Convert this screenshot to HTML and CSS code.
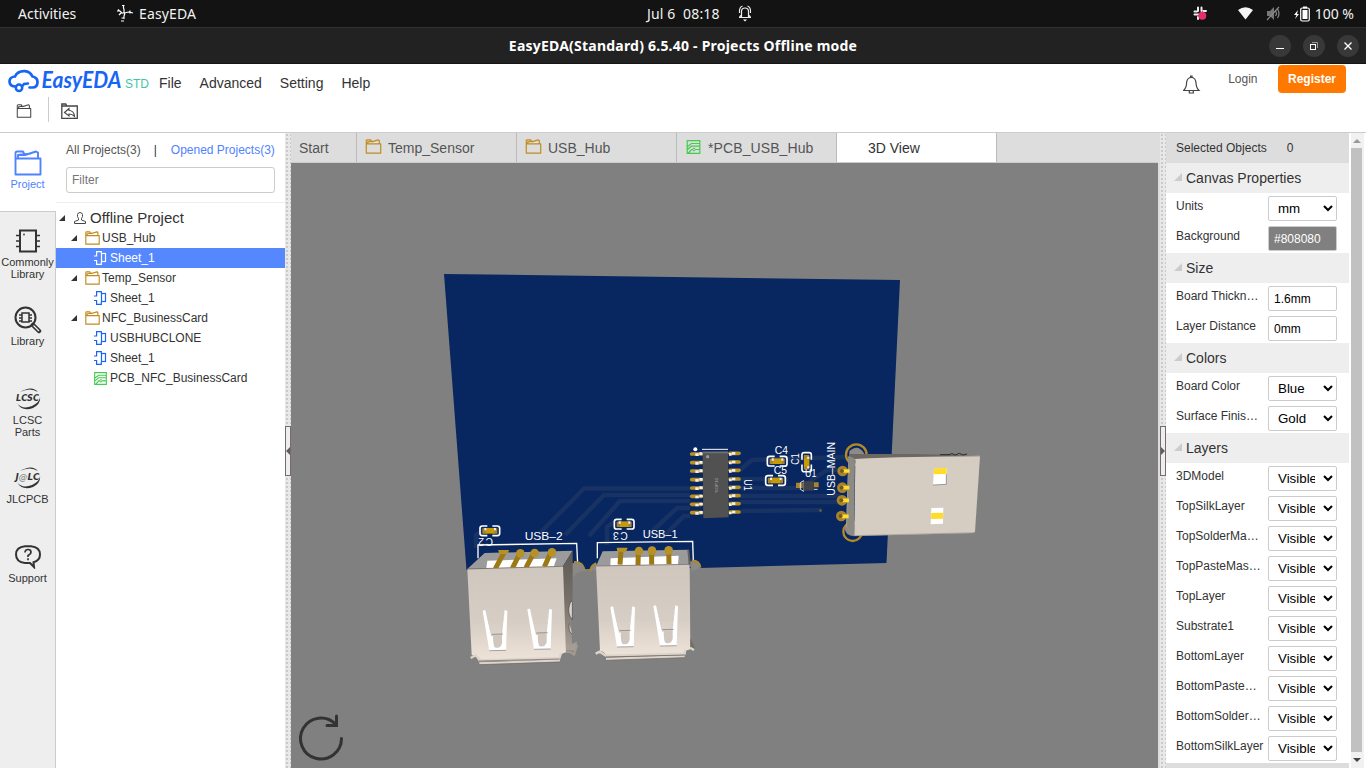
FILE: index.html
```html
<!DOCTYPE html>
<html lang="en">
<head>
<meta charset="utf-8">
<title>EasyEDA</title>
<link rel="stylesheet" href="styles.css">
</head>
<body>
<svg class="defs" width="0" height="0">
  <symbol id="folder" viewBox="0 0 28 26"><path d="M1.500 24.500V8.500h25v16zM1.500 8.500V3q0-1.500 1.500-1.500h6l1.500 3M4 8V5l13-1.500M11 5l11-3.500 2 1v6" fill="none" stroke="currentColor" stroke-linejoin="round"/></symbol>
  <symbol id="sheet" viewBox="0 0 13 14"><path d="M7 .600H2.600v4.400H0M0 9.500h2.600v3.900H7M7.300 0v2.500M7.300 11v3" fill="none" stroke="currentColor" stroke-width="1.200"/><rect x="7.500" y="2.500" width="4" height="8" fill="none" stroke="currentColor" stroke-width="1.200"/></symbol>
  <symbol id="pcb" viewBox="0 0 14 14"><path d="M.7.7h12.600v12.600H.7zM1 6.500l4-3h8M1 9.500l4-3.300h8M2 13l3-3.500h1.500M9 9.500h4" fill="none" stroke="currentColor" stroke-width="1.200"/><circle cx="7.500" cy="9.500" r="1.300" fill="none" stroke="currentColor"/></symbol>
  <symbol id="tri" viewBox="0 0 8 8"><path d="M8 0v8H0z" fill="currentColor"/></symbol>
</svg>

<div class="topbar">
  <span class="act">Activities</span>
  <svg class="appicon" width="18" height="18" viewBox="0 0 18 18" fill="none" stroke="#fff" stroke-width="1.200"><path d="M0 7h3l2 2 4-.500 3-.500 4 1M7 9V5.500L6.500 4V1.500M5 1.500h2.500M8 9l-1 3v3M4.500 14h3M4 17h3M1 5.500l1.500 1.500M13 6.500v3M4 9l-2 2"/></svg>
  <span class="app">EasyEDA</span>
  <span class="clock">Jul 6&nbsp; 08:18</span>
  <svg class="tbell" width="14" height="17" viewBox="0 0 14 17" fill="none" stroke="#eee" stroke-width="1.200"><path d="M1 12.500h12M3.500 12V6.500q0-3.500 3.500-3.500t3.500 3.500V12M1.500 8q-.5-6 3-7M12.500 8q.5-6-3-7M1.500 12l2-2M12.500 12l-2-2"/><path d="M5 14.500h4L7 16.500z" fill="#fff" stroke="none"/></svg>
  <div class="tray">
    <svg width="15" height="15" viewBox="0 0 15 15"><path d="M5 1.500v3.500M8.500 1.500v3.500M1.500 5.500h2.500M1.500 8.500h4M5 11v2M10.500 5h2.500" stroke="#eee" stroke-width="2" stroke-linecap="round"/><circle cx="9.300" cy="9.800" r="4" fill="#e52d6f"/></svg>
    <svg class="wifi" width="15" height="13" viewBox="0 0 15 13"><path d="M0 3q7.500-5.500 15 0L7.500 12.500z" fill="#f5f5f5"/></svg>
    <svg class="mute" width="15" height="15" viewBox="0 0 15 15"><path d="M1 5h3l4-4v13l-4-4H1z" fill="#777"/><path d="M9.500 5q2 2.500 0 5M11.500 3q3 4.500 0 9M1 14L13 1" fill="none" stroke="#888" stroke-width="1.200"/></svg>
    <svg class="bat" width="16" height="16" viewBox="0 0 16 16"><path d="M4 4L0 9h2.500L1 13l4-5H3z" fill="#fff"/><rect x="6.700" y="2" width="8.600" height="13" rx="1.500" fill="none" stroke="#fff" stroke-width="1.200"/><path d="M9 .5h4v2H9zM8.500 4h5v9h-5z" fill="#fff"/></svg>
    <span class="pct">100 %</span>
  </div>
</div>
<div class="titlebar">
  <span class="wtitle">EasyEDA(Standard) 6.5.40 - Projects Offline mode</span>
  <div class="winbtns">
    <span class="wb"><svg width="22" height="22"><path d="M7 13.500h8" stroke="#fff"/></svg></span>
    <span class="wb"><svg width="22" height="22" fill="none"><path d="M9 7.500h5.500V13" stroke="#999"/><rect x="7.500" y="9.500" width="5" height="5" stroke="#fff"/></svg></span>
    <span class="wb"><svg width="22" height="22"><path d="M7.500 7.500l7 7M14.500 7.500l-7 7" stroke="#fff" stroke-width="1.300"/></svg></span>
  </div>
</div>

<header class="header">
  <div class="menus">
    <svg class="logo" width="142" height="26" viewBox="0 0 142 26"><path d="M8 17.500Q1.500 17.500 1.500 12.500 1.500 8 7 7.500 9.500 1.800 17 2.200q5 .3 7.500 5.300 5 1 5 5.500 0 5.500-5 5.500h-3" fill="none" stroke="#1765f6" stroke-width="2.700" stroke-linecap="round"/><path d="M14 17.500l2-2.500 4-.500" fill="none" stroke="#1765f6" stroke-width="2.500" stroke-linecap="round"/><circle cx="11" cy="18.800" r="3.200" fill="none" stroke="#1765f6" stroke-width="2.500"/><text class="brand" x="33.500" y="19.300" textLength="80" lengthAdjust="spacingAndGlyphs">EasyEDA</text><text class="std" x="117" y="19" textLength="24">STD</text></svg>
    <nav class="nav"><span>File</span><span>Advanced</span><span>Setting</span><span>Help</span></nav>
    <div class="account">
      <svg width="18" height="20" viewBox="0 0 18 20" fill="none" stroke="#444" stroke-width="1.200"><path d="M.600 15.500q3-3 3-8Q4.300 2.500 8.300 2.500t4.700 5q0 5 3 8zM6.300 15.500v2.500h4v-2.500M7.600 2.500V1h1.400v1.500"/></svg>
      <span class="login">Login</span><span class="register">Register</span>
    </div>
  </div>
  <div class="tools">
    <svg class="t1" width="16" height="14"><use href="#folder"/></svg>
    <svg class="t2" width="17" height="17" viewBox="0 0 17 17" fill="none" stroke="#444" stroke-width="1.300"><path d="M.800 15.300V1h4l1 2h10.500v12.300zM1 3h5"/><path d="M3.500 9.500l4.500-4v2q5 0 5.500 6-2-2.500-5.500-2.500v2z" stroke-width="1.100"/></svg>
  </div>
</header>

<main class="main">
  <aside class="rail">
    <div class="ritem on"><svg width="28" height="26"><use href="#folder"/></svg><span>Project</span></div>
    <div class="ritem"><svg width="26" height="24" viewBox="0 0 26 24" fill="none" stroke="#333" stroke-width="2"><rect x="5" y="1.500" width="16" height="21"/><path d="M1 6.500h4M1 12h4M1 17.500h4M21 6.500h4M21 12h4M21 17.500h4" stroke-width="1.700"/><circle cx="9" cy="5.500" r=".3" stroke-width="1.300"/></svg><span>Commonly<br>Library</span></div>
    <div class="ritem"><svg width="28" height="28" viewBox="0 0 28 28" fill="none" stroke="#333" stroke-width="2"><circle cx="11.500" cy="11.500" r="10"/><path d="M8 7h7v9H8zM5 9h3M5 12h3M5 15h3M15 9h3M15 12h3M15 15h3" stroke-width="1.500"/><path d="M19 19l6 6" stroke-width="4.500" stroke-linecap="round"/><path d="M19.500 19.500l5.500 5.500" stroke="#eee" stroke-width="1.200"/></svg><span>Library</span></div>
    <div class="ritem"><svg width="28" height="22" viewBox="0 0 28 22"><path d="M6 4Q18-3 24 4q-8-5-18 0zM3 15q5 7 15 3 8-4 8-9 1 7-7 11-11 4-16-5z" fill="#333"/><text class="mini" x="2" y="13" textLength="23" lengthAdjust="spacingAndGlyphs">LCSC</text></svg><span>LCSC<br>Parts</span></div>
    <div class="ritem"><svg width="28" height="22" viewBox="0 0 28 22"><path d="M6 4Q18-3 24 4q-8-5-18 0zM3 15q5 7 15 3 8-4 8-9 1 7-7 11-11 4-16-5z" fill="#333"/><text class="mini" x="1.500" y="13" textLength="24" lengthAdjust="spacingAndGlyphs">J<tspan class="at">@</tspan>LC</text></svg><span>JLCPCB</span></div>
    <div class="ritem"><svg width="28" height="24" viewBox="0 0 28 24" fill="none" stroke="#333" stroke-width="2"><path d="M20 22l-4-4H11Q2 17 2 9.500T11 1.200h6Q26 2 26 9.500q0 6-6.500 7.700z"/><path d="M11 7.500q0-3 3-3t3 2.500q0 2-3 3.500v1.500M14 13.300v2" stroke-width="1.700"/></svg><span>Support</span></div>
  </aside>
  <section class="projects">
    <div class="filters"><span>All Projects(3)</span><span class="bar">|</span><span class="blue">Opened Projects(3)</span></div>
    <input class="filter" placeholder="Filter">
    <div class="tree">
      <div class="node root"><svg class="tri" width="6" height="6"><use href="#tri"/></svg><svg class="user" width="12" height="12" viewBox="0 0 12 12" fill="none" stroke="#444"><path d="M.5 11.500V9.500L4.500 8V6.500Q3 4.500 3.500 2.500 4 .5 6 .5t2.500 2Q9 4.500 7.500 6.500V8l4 1.500v2z"/></svg>Offline Project</div>
      <div class="node l1"><svg class="tri" width="6" height="6"><use href="#tri"/></svg><svg class="fold" width="15" height="14"><use href="#folder"/></svg>USB_Hub</div>
      <div class="node l2 sel"><svg width="13" height="14"><use href="#sheet"/></svg>Sheet_1</div>
      <div class="node l1"><svg class="tri" width="6" height="6"><use href="#tri"/></svg><svg class="fold" width="15" height="14"><use href="#folder"/></svg>Temp_Sensor</div>
      <div class="node l2"><svg width="13" height="14"><use href="#sheet"/></svg>Sheet_1</div>
      <div class="node l1"><svg class="tri" width="6" height="6"><use href="#tri"/></svg><svg class="fold" width="15" height="14"><use href="#folder"/></svg>NFC_BusinessCard</div>
      <div class="node l2"><svg width="13" height="14"><use href="#sheet"/></svg>USBHUBCLONE</div>
      <div class="node l2"><svg width="13" height="14"><use href="#sheet"/></svg>Sheet_1</div>
      <div class="node l2"><svg class="green" width="13" height="13"><use href="#pcb"/></svg>PCB_NFC_BusinessCard</div>
    </div>
  </section>
  <div class="split"><span class="grip"><i class="left"></i></span></div>
  <section class="work">
    <div class="tabs">
      <div class="tab first">Start</div>
      <div class="tab"><svg class="fold" width="17" height="15"><use href="#folder"/></svg>Temp_Sensor</div>
      <div class="tab"><svg class="fold" width="17" height="15"><use href="#folder"/></svg>USB_Hub</div>
      <div class="tab pcbtab"><svg class="green" width="15" height="14"><use href="#pcb"/></svg>*PCB_USB_Hub</div>
      <div class="tab active">3D View</div>
    </div>
    <svg class="view" width="867" height="605" viewBox="291 163 867 605">
      <defs>
        <linearGradient id="metal" x2="0" y2="1"><stop stop-color="#cfc6bd"/><stop offset=".6" stop-color="#d6cdc4"/><stop offset="1" stop-color="#eee3d9"/></linearGradient>
        <linearGradient id="side" x2="0" y2="1"><stop stop-color="#5d5955"/><stop offset=".5" stop-color="#777068"/><stop offset="1" stop-color="#aaa198"/></linearGradient>
        <g id="pinl"><path d="M35 0h30" stroke="#b89125" stroke-width="11" stroke-linecap="round"/><path d="M46 2h10M58-1h10" stroke="#eee" stroke-width="8"/></g>
        <g id="pinr"><path d="M150 0h27" stroke="#b89125" stroke-width="11" stroke-linecap="round"/><path d="M147 3h8M156 0h10" stroke="#eee" stroke-width="8"/></g>
        <g id="cap"><path d="M23 2H8q-7 0-7 7v15q0 7 7 7h15M38 2h15q7 0 7 7v15q0 7-7 7H38" fill="none" stroke="#fff" stroke-width="5"/><path d="M8 9h12v16H8zM41 9h12v16H41z" fill="#a8842d"/><path d="M18 8h26v17H18z" fill="#c79b08"/><path d="M14 8h6v7h-6zM43 8h6v7h-6z" fill="#eee"/></g>
        <g id="slot"><path d="M0 2l8-2 18 80q12-8 28 0L66 0l8 3-4 118-50 2z" fill="#fff"/><path d="M8 2l20 70h25L66 3l0-1-8 70 0 6H27z" fill="#d5ccc3"/><path d="M31 76h27v24q-5 18-22 12-5-7-5-36z" fill="#d0c7be"/><path d="M27 73l34-1M20 122l50-1" stroke="#777" stroke-width="2"/></g>
      </defs>
      <path d="M444 274L900 280 886.500 563 700 568 466.500 570z" fill="#08265f"/>
      <g fill="none" stroke="#183264" stroke-width="4.500">
        <path d="M690 488.500H584L540 533M690 495H604L565 535M690 501H620L589 536M690 508L677 508 648 535M690 516L684 516 662 538M740 470l12-10 95-3M740 479h48M740 488h60l27-18h18M740 496h100M740 502h100M740 511l82-1M607 545v-18l7-5M476 548v-13l8-5"/>
      </g>
      <circle cx="820.500" cy="510.500" r="1.300" fill="#6c6230"/>

      <g transform="translate(680 430) scale(.33333)">
        <path d="M66 58h78" stroke="#fff" stroke-width="3"/><circle cx="46" cy="58" r="6" fill="#fff"/>
        <use href="#pinl" y="72"/><use href="#pinl" y="98"/><use href="#pinl" y="123"/><use href="#pinl" y="149"/><use href="#pinl" y="174"/><use href="#pinl" y="199"/><use href="#pinl" y="223"/><use href="#pinl" y="248"/>
        <use href="#pinr" y="70"/><use href="#pinr" y="96"/><use href="#pinr" y="121"/><use href="#pinr" y="147"/><use href="#pinr" y="172"/><use href="#pinr" y="197"/><use href="#pinr" y="221"/><use href="#pinr" y="246"/>
        <path d="M68 65l76-1 2 198-76 3z" fill="#515151"/><path d="M68 65h76v5H68z" fill="#707070"/><circle cx="83" cy="80" r="5" fill="#999"/>
        <text class="mark" transform="translate(115 188) rotate(-90)" textLength="44">SOP16</text>
        <text class="silk" transform="translate(192 148) rotate(90)" textLength="34" lengthAdjust="spacingAndGlyphs">U1</text>
        <use href="#cap" x="261" y="77"/><use href="#cap" x="256" y="135"/>
        <use href="#cap" transform="translate(396 67) rotate(90) scale(.97)"/>
        <text class="silk" x="284" y="72" textLength="40">C4</text><text class="silk" x="281" y="132" textLength="40">C5</text>
        <text class="silk" transform="translate(357 104) rotate(-90)" textLength="34" lengthAdjust="spacingAndGlyphs">C1</text>
        <path d="M348 158h20v16h-20zM401 157h15v15h-15z" fill="#a8842d"/><path d="M361 178v-20l10-6v32l-10-6M401 178h12" fill="none" stroke="#ddd" stroke-width="3"/><path d="M370 154h31v28h-31z" fill="#424348"/>
        <text class="silk" x="375" y="140" textLength="34" lengthAdjust="spacingAndGlyphs">U1</text>
        <text class="silk usbmain" transform="translate(466 197) rotate(-90)" textLength="161" lengthAdjust="spacingAndGlyphs">USB–MAIN</text>
        <g fill="none" stroke="#b08b28" stroke-width="7"><circle cx="529" cy="74" r="31"/><circle cx="518" cy="305" r="28"/></g>
        <path d="M508 64q25-25 45 7v10h-45zM494 290q0 27 29 29v-40z" fill="#8d8a88"/>
        <path d="M505 80l395-5-5 10-375 5 3 227-25-28z" fill="#a9a49e"/><path d="M505 78l20 8-3 231-21-26z" fill="#8d8983"/>
        <path d="M510 72l200 0 190 5-2 5-373 5-18-9z" fill="#6c6861"/>
        <path d="M526 87Q690 79 900 79l-15 226-4 4-358 9z" fill="#d5ccc2"/><path d="M523 317l360-9" stroke="#9f9790" stroke-width="2"/><path d="M780 74h27l9-3 10 4 12-5 11 5 12-3" fill="none" stroke="#292929" stroke-width="3"/>
        <path d="M762 115l38-1-2 49-39 2z" fill="#fff"/><path d="M762 115l38-1-1 18-38 1z" fill="#ffdc28"/><path d="M799 132v31l-40 2" fill="none" stroke="#777" stroke-width="2"/>
        <path d="M754 234l36-1-1 48-37 2z" fill="#fff"/><path d="M754 249l35-1v18l-36 1z" fill="#ffdc28"/>
        <g fill="#a8832a"><circle cx="488" cy="123" r="16"/><circle cx="487" cy="173" r="16"/><circle cx="486" cy="211" r="16"/><circle cx="484" cy="258" r="16"/></g>
        <path d="M487 123h22M486 173h22M485 211h22M484 259h22" stroke="#ffdc2d" stroke-width="11"/>
        <g fill="#6f5726"><circle cx="486" cy="123" r="6"/><circle cx="485" cy="173" r="6"/><circle cx="484" cy="211" r="6"/><circle cx="482" cy="258" r="6"/></g>
      </g>

      <g transform="translate(440 510) scale(.33333)">
        <use href="#cap" x="119" y="46"/><use href="#cap" x="522" y="26"/>
        <text class="silk" transform="translate(159 85) rotate(180)" textLength="44">C2</text>
        <text class="silk" transform="translate(563 66) rotate(180)" textLength="44">C3</text>
        <text class="silk" x="254" y="90" textLength="114" lengthAdjust="spacingAndGlyphs">USB–2</text><text class="silk" x="608" y="84" textLength="105" lengthAdjust="spacingAndGlyphs">USB–1</text>
        <path d="M114 145v-40l296-5 3 62M472 145V98l286-4 2 60" fill="none" stroke="#fff" stroke-width="4"/>
        <path d="M402 157q28-2 31 27M452 184q-1-16 17-24M755 152q23-1 26 21" stroke="#b08b28" stroke-width="7" fill="none"/>
        <path d="M392 160q42-5 42 24-35 1-38 36zM745 154q34-3 35 20l-24 10zM454 181q2-18 22-19v20z" fill="#8c8884"/>
        <path d="M82 177l52-48 264-7-30 48z" fill="#9b9b9b"/><path d="M142 152l208-7-9 25-202 5z" fill="#fff"/>
        <path d="M468 169l20-45 257-5 5 45z" fill="#9b9b9b"/><path d="M512 145l204-8-2 28-203 4z" fill="#fff"/>
        <g stroke="#9d7914" stroke-width="15"><path d="M192 128l-26 48M240 129l-23 46M282 127l-24 46M333 126l-20 45M543 121l-3 43M595 122l-1 44M635 120v44M686 119l1 43"/></g>
        <g fill="#b6912a"><path d="M174 120h34l-7 12h-22zM530 113h33l-5 12h-26z"/><circle cx="241" cy="130" r="13"/><circle cx="284" cy="129" r="13"/><circle cx="336" cy="127" r="13"/><circle cx="597" cy="123" r="13"/><circle cx="636" cy="122" r="13"/><circle cx="686" cy="121" r="13"/></g>
        <path d="M368 170l30-48 0 150-6 20 4 110 16-8-6 28-28-2z" fill="url(#side)"/><path d="M393 273q-12 25-3 46l7 10v-52zM388 340q-4 25 8 32" fill="#ddd6ce" stroke="#444" stroke-width="2"/>
        <path d="M82 177q140-6 287-9l9 259-14 5-5 12-245 6-7-11-12-4z" fill="url(#metal)"/>
        <path d="M468 167l281-5 2 256-15 4-6 8-230 7-10-11-10-4z" fill="url(#metal)"/>
        <path d="M82 177l288-8M468 168l281-5" stroke="#665f57" stroke-width="2"/><path d="M749 164l-4-45" stroke="#64605c" stroke-width="6"/><path d="M751 385l13 25v8h-13z" fill="#746e68"/>
        <g fill="none" stroke="#ddd4cb" stroke-width="7"><path d="M92 444l15-8 11 10v5l240-7 5-14M118 460l242-8M467 431l12-6 18 12 237-6 2-12M498 447l236-8M750 413l12 7"/></g>
        <path d="M378 425q15 0 24 8l9-28" fill="none" stroke="#a39a91" stroke-width="7"/>
        <path d="M115 453l244-6M118 464l242-8M498 441l236-6M498 451l236-8" stroke="#716961" stroke-width="2"/>
        <use href="#slot" x="128" y="300"/><use href="#slot" x="262" y="296"/><use href="#slot" x="511" y="289"/><use href="#slot" x="640" y="286"/>
      </g>
      <path d="M341.500 738.500a20.500 20.500 0 1 1-6-14.500M327 725.500h9.500V716" fill="none" stroke="#333" stroke-width="3" stroke-linecap="round"/>
    </svg>
  </section>
  <div class="split right"><span class="grip"><i></i></span></div>
  <aside class="props">
    <div class="selected"><span>Selected Objects</span><span>0</span></div>
    <h3><svg width="8" height="8"><use href="#tri"/></svg>Canvas Properties</h3>
    <div class="row"><label>Units</label><select><option>mm</option></select></div>
    <div class="row"><label>Background</label><input class="grey" value="#808080"></div>
    <h3><svg width="8" height="8"><use href="#tri"/></svg>Size</h3>
    <div class="row"><label>Board Thickn…</label><input value="1.6mm"></div>
    <div class="row"><label>Layer Distance</label><input value="0mm"></div>
    <h3><svg width="8" height="8"><use href="#tri"/></svg>Colors</h3>
    <div class="row"><label>Board Color</label><select><option>Blue</option></select></div>
    <div class="row"><label>Surface Finis…</label><select><option>Gold</option></select></div>
    <h3><svg width="8" height="8"><use href="#tri"/></svg>Layers</h3>
    <div class="row"><label>3DModel</label><select><option>Visible</option></select></div>
    <div class="row"><label>TopSilkLayer</label><select><option>Visible</option></select></div>
    <div class="row"><label>TopSolderMa…</label><select><option>Visible</option></select></div>
    <div class="row"><label>TopPasteMas…</label><select><option>Visible</option></select></div>
    <div class="row"><label>TopLayer</label><select><option>Visible</option></select></div>
    <div class="row"><label>Substrate1</label><select><option>Visible</option></select></div>
    <div class="row"><label>BottomLayer</label><select><option>Visible</option></select></div>
    <div class="row"><label>BottomPaste…</label><select><option>Visible</option></select></div>
    <div class="row"><label>BottomSolder…</label><select><option>Visible</option></select></div>
    <div class="row"><label>BottomSilkLayer</label><select><option>Visible</option></select></div>
  </aside>
  <div class="scroll"><i class="up"></i><span class="thumb"></span><i class="down"></i></div>
</main>
</body>
</html>
```
FILE: styles.css
```css
* { box-sizing: border-box; }
body { margin: 0; width: 1366px; height: 768px; overflow: hidden; display: flex; flex-direction: column; background: #fff; color: #333; font: 12px "Liberation Sans", Arial, sans-serif; }
svg { display: block; flex: none; }
.defs { display: none; }
.topbar { height: 27px; flex: none; background: #131313; color: #f2f2f2; display: flex; align-items: center; font: 14px "Noto Sans", sans-serif; white-space: nowrap; }
.act { margin-left: 18px; width: 99px; }
.appicon { margin-top: -1px; }
.app { margin-left: 4px; width: 508px; letter-spacing: .15px; }
.clock { width: 91px; letter-spacing: .15px; }
.tbell { margin-top: -1px; }
.tray { display: flex; align-items: center; margin-left: auto; padding-right: 12px; }
.wifi { margin-left: 30px; }
.mute { margin-left: 13px; }
.bat { margin-left: 13px; }
.pct { margin-left: 5px; }
.titlebar { height: 37px; flex: none; background: #222; border-top: 1px solid #303030; border-bottom: 1px solid #151515; display: grid; grid-template-columns: 1fr auto 1fr; align-items: center; color: #fff; }
.wtitle { grid-column: 2; font: bold 14px "Noto Sans", sans-serif; letter-spacing: .22px; white-space: nowrap; }
.winbtns { display: flex; gap: 12px; justify-content: flex-end; padding-right: 7px; }
.wb { width: 22px; height: 22px; border-radius: 50%; background: #383838; }
.header { height: 69px; flex: none; border-bottom: 1px solid #ccc; }
.menus { display: flex; height: 32px; padding-left: 8px; }
.logo { margin-top: 5px; overflow: visible; }
.brand { font: italic bold 22px Lato, sans-serif; fill: #1765f6; }
.std { font: 12px "Liberation Sans", sans-serif; fill: #3fc6a2; }
.nav { display: flex; gap: 18px; margin: 11px 0 0 9px; font-size: 14px; }
.account { margin-left: auto; display: flex; padding-right: 20px; }
.account svg { margin-top: 11px; }
.login { margin: 8px 0 0 27.500px; color: #555; }
.register { margin: 1px 0 0 20.500px; width: 68px; height: 28px; line-height: 28px; text-align: center; color: #fff; background: #ff7800; border-radius: 4px; font-weight: bold; }
.tools { display: flex; color: #444; padding-left: 16px; }
.t1 { margin-top: 8px; stroke-width: 1.900px; }
.t2 { margin-top: 7px; margin-left: 12px; order: 2; }
.tools::before { content: ""; order: 1; width: 1px; height: 25px; margin: 1px 0 0 16px; background: #ccc; }
.main { display: flex; flex: 1; min-height: 0; }
.rail { width: 56px; flex: none; background: #eee; text-align: center; font-size: 11px; line-height: 12px; display: flex; flex-direction: column; }
.ritem { height: 79px; flex: none; display: flex; flex-direction: column; align-items: center; padding-top: 17px; gap: 3px; border-right: 1px solid #ccc; }
.ritem.on { background: #fff; color: #4f82ff; border-right: 0; border-bottom: 1px solid #ccc; stroke-width: 1.900px; gap: 2px; padding-right: 1px; }
.ritem:nth-child(n+3) { padding-top: 15px; gap: 1px; }
.ritem:nth-child(n+4) { padding-top: 18px; gap: 4px; }
.ritem:last-child { flex: 1; padding-top: 17px; gap: 3px; }
.mini { font: italic bold 8.500px "DejaVu Sans", sans-serif; fill: #333; }
.at { fill: #999; }
.projects { width: 229px; flex: none; }
.filters { height: 33px; display: flex; padding: 10px 0 0 10px; color: #555; white-space: nowrap; }
.bar { margin: 0 14px 0 13px; color: #333; }
.blue { color: #4f82ff; }
.filter { display: block; width: 209px; height: 26px; margin: 1px 0 9px 10px; padding: 0 5px; border: 1px solid #ccc; border-radius: 3px; font: 12px "Liberation Sans", sans-serif; }
.tree { border-top: 1px solid #eee; padding-top: 5px; }
.node { height: 20px; display: flex; align-items: center; white-space: nowrap; }
.node.root { padding: 0 0 1px 3px; font-size: 15px; }
.user { margin: 0 4px 0 9px; }
.l1 { padding-left: 15px; }
.l1 .fold { margin: 0 2px 0 8px; }
.fold { color: #c08c20; stroke-width: 2.1px; }
.l2 { padding-left: 38px; }
.l2 svg { margin-right: 3px; color: #1765f6; }
.l2 .green, .green { color: #45cb50; }
.sel { background: #5588ff; color: #fff; }
.sel svg { color: #fff; }
.split { width: 6px; flex: none; background-color: #e8e8e8; background-image: radial-gradient(circle, #aaa 0.5px, transparent 0.9px); background-size: 4px 4px; display: flex; align-items: center; }
.split.right { width: 8px; border-left: 2px solid #ddd; }
.grip { width: 6px; height: 50px; border: 1px solid #756a6c; background: #eee; display: flex; align-items: center; margin-bottom: -1px; }
.grip i { border: 4px solid transparent; border-left-color: #655b5e; border-right: 0; }
.grip i.left { border: 4px solid transparent; border-right-color: #655b5e; border-left: 0; }
.work { width: 867px; flex: none; }
.tabs { height: 30px; background: #ddd; border-bottom: 1px solid #ccc; display: flex; color: #555; font-size: 14px; }
.tab { width: 160px; display: flex; align-items: center; border-right: 1px solid #bbb; padding-left: 8px; gap: 6px; }
.tab svg { margin-top: -2px; }
.pcbtab { padding-left: 9px; gap: 7px; letter-spacing: .1px; }
.tab.first { width: 66px; padding-left: 8px; }
.tab.active { background: #fff; color: #333; padding-left: 31px; }
.view { background: #808080; }
.silk { font: 31px "Liberation Sans", sans-serif; fill: #fff; }
.usbmain { font-size: 32px; }
.mark { font: 13px "Liberation Sans", sans-serif; fill: #aaa; }
.props { width: 183px; flex: none; background: #ddd; }
.selected { height: 30px; display: flex; align-items: center; padding-left: 10px; gap: 20px; }
.props h3 { height: 30px; margin: 0; padding-left: 8px; background: #eee; display: flex; align-items: center; gap: 4px; font-size: 14px; font-weight: normal; color: #333; }
.props h3 svg { color: #ccc; margin-top: -2px; }
.row { height: 30px; background: #fff; display: flex; padding: 3px 0 0 10px; }
.row label { width: 92px; flex: none; margin-top: 3px; white-space: nowrap; }
.row select, .row input { width: 69px; height: 25px; margin: 0; border: 1px solid #ccc; border-radius: 2px; background: #fff; padding: 0 5px; color: #000; font: 13.333px "Liberation Sans", sans-serif; }
.row input { font-size: 12px; }
.row .grey { background: #808080; color: #fff; }
.scroll { width: 13px; margin-left: 2px; flex: none; background: #f1f1f1; display: flex; flex-direction: column; align-items: flex-start; }
.thumb { width: 11px; background: #c1c1c1; flex: 1; }
.up, .down { margin: 6px 0 5px 2px; border: 4px solid transparent; border-top: 0; border-bottom-color: #999; }
.down { margin: 6px 0 6px 2px; border-bottom: 0; border-top: 4px solid #444; }
```
